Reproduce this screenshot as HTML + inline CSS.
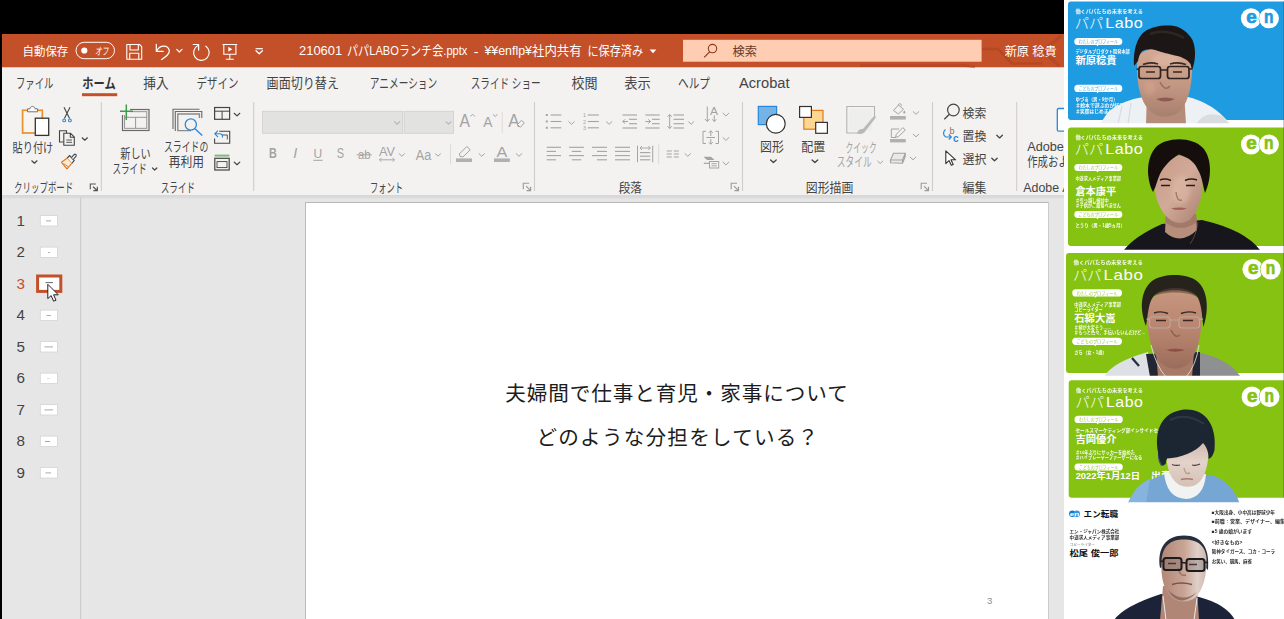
<!DOCTYPE html>
<html lang="ja">
<head>
<meta charset="utf-8">
<title>PowerPoint</title>
<style>
html,body{margin:0;padding:0;background:#000;}
body{width:1284px;height:619px;overflow:hidden;}
svg{display:block;}
text{font-family:"Liberation Sans","Noto Sans CJK JP",sans-serif;white-space:pre;}
</style>
</head>
<body>
<svg width="1284" height="619" viewBox="0 0 1284 619">
<rect x="0.0" y="0.0" width="1284.0" height="619.0" fill="#000"/>
<rect x="2.0" y="34.0" width="1062.0" height="585.0" fill="#e6e6e6"/>
<rect x="2.0" y="34.0" width="1062.0" height="33.5" fill="#c35028"/>
<rect x="2.0" y="67.5" width="1062.0" height="127.5" fill="#f3f2f1"/>
<linearGradient id="rs" x1="0" y1="0" x2="0" y2="1"><stop offset="0" stop-color="#d6d6d6"/><stop offset="0.7" stop-color="#dcdcdc"/><stop offset="1" stop-color="#e6e6e6"/></linearGradient>
<rect x="2.0" y="195.0" width="1062.0" height="4.0" fill="url(#rs)"/>
<path d="M860,65.5 H965 L975,67" fill="none" stroke="#a9411f" stroke-width="2.5" opacity="0.5"/>
<path d="M982,49 H998 L1012,63.5 H1042" fill="none" stroke="#a9411f" stroke-width="2.6" opacity="0.55"/>
<path d="M1061,36 L1043,50.5 L1059,66" fill="none" stroke="#a9411f" stroke-width="3.2" opacity="0.45"/>
<text x="22.5" y="55.6" font-size="12" fill="#fff" textLength="45.8" lengthAdjust="spacingAndGlyphs">自動保存</text>
<rect x="76.0" y="42.3" width="38.5" height="16.4" fill="none" stroke="#fff" stroke-width="1" rx="8.2"/>
<circle cx="84.3" cy="50.5" r="3.1" fill="#fff"/>
<text x="95.0" y="54.5" font-size="10.5" fill="#fff" textLength="13.3" lengthAdjust="spacingAndGlyphs" font-style="italic">オフ</text>
<path d="M126.8,44.5 H139.5 L141.7,46.7 V59.3 H126.8 Z M130,44.5 V50 H138.3 V44.5 M129.7,59.3 V53.3 H138.8 V59.3" fill="none" stroke="#fff" stroke-width="1.1" stroke-linejoin="round"/>
<path d="M156.3,44.3 V51.3 H163.3 M156.6,51 C160,44.5 168,44.8 169.3,50.5 C169.8,54.5 165.5,57 161.5,59.5" fill="none" stroke="#fff" stroke-width="1.2" stroke-linecap="round" stroke-linejoin="round"/>
<polyline points="176.7,49.4 179.3,52.0 182.0,49.4" fill="none" stroke="#fff" stroke-width="1.2" stroke-linecap="round" stroke-linejoin="round"/>
<path d="M193.2,44.5 H198.6 V50.1 M205.9,46.2 A7.8,7.8 0 1 1 198.1,45.5" fill="none" stroke="#fff" stroke-width="1.2" stroke-linecap="round" stroke-linejoin="round"/>
<path d="M222.5,44.5 H237.2 M223.8,44.5 V54.3 H235.9 V44.5 M229.8,54.3 V59.3 M225.8,59.3 H233.8" fill="none" stroke="#fff" stroke-width="1.1"/>
<path d="M228.3,46.8 L232.3,49.3 L228.3,51.8 Z" fill="#fff"/>
<line x1="255.6" y1="48.7" x2="262.8" y2="48.7" stroke="#fff" stroke-width="1.2"/>
<polyline points="256.0,50.8 259.2,53.8 262.4,50.8" fill="none" stroke="#fff" stroke-width="1.3" stroke-linecap="round" stroke-linejoin="round"/>
<text x="299.0" y="55.3" font-size="13" fill="#fff" textLength="43.2" lengthAdjust="spacingAndGlyphs">210601</text>
<text x="347.0" y="55.3" font-size="13" fill="#fff" textLength="120.4" lengthAdjust="spacingAndGlyphs">パパLABOランチ会.pptx</text>
<text x="473.7" y="55.8" font-size="13" fill="#fff" textLength="4.9" lengthAdjust="spacingAndGlyphs">-</text>
<text x="484.4" y="55.3" font-size="13" fill="#fff" textLength="97.2" lengthAdjust="spacingAndGlyphs">¥¥enflp¥社内共有</text>
<text x="587.5" y="55.3" font-size="13" fill="#fff" textLength="55.6" lengthAdjust="spacingAndGlyphs">に保存済み</text>
<path d="M649.6,49.6 H656.4 L653,53.3 Z" fill="#fff"/>
<rect x="683.0" y="39.8" width="298.6" height="21.9" fill="#fecdb2"/>
<circle cx="712.5" cy="48.6" r="4.2" fill="none" stroke="#8a3a1c" stroke-width="1.1"/>
<line x1="709.6" y1="51.8" x2="704.2" y2="57.3" stroke="#8a3a1c" stroke-width="1.2"/>
<text x="732.5" y="55.5" font-size="12.5" fill="#6b3a26" textLength="24.5" lengthAdjust="spacingAndGlyphs">検索</text>
<text x="1004.7" y="56.0" font-size="12.5" fill="#fff" textLength="52.0" lengthAdjust="spacingAndGlyphs">新原 稔貴</text>
<text x="16.0" y="88.3" font-size="13.5" fill="#444" textLength="37.4" lengthAdjust="spacingAndGlyphs">ファイル</text>
<text x="82.3" y="88.3" font-size="13.5" fill="#333" font-weight="bold" textLength="33.4" lengthAdjust="spacingAndGlyphs">ホーム</text>
<rect x="82.0" y="93.2" width="35.2" height="3.0" fill="#c35028"/>
<text x="143.3" y="88.3" font-size="13.5" fill="#444" textLength="25.3" lengthAdjust="spacingAndGlyphs">挿入</text>
<text x="196.4" y="88.3" font-size="13.5" fill="#444" textLength="42.0" lengthAdjust="spacingAndGlyphs">デザイン</text>
<text x="266.6" y="88.3" font-size="13.5" fill="#444" textLength="72.4" lengthAdjust="spacingAndGlyphs">画面切り替え</text>
<text x="369.8" y="88.3" font-size="13.5" fill="#444" textLength="67.4" lengthAdjust="spacingAndGlyphs">アニメーション</text>
<text x="470.7" y="88.3" font-size="13.5" fill="#444" textLength="70.0" lengthAdjust="spacingAndGlyphs">スライド ショー</text>
<text x="571.6" y="88.3" font-size="13.5" fill="#444" textLength="26.0" lengthAdjust="spacingAndGlyphs">校閲</text>
<text x="624.2" y="88.3" font-size="13.5" fill="#444" textLength="26.5" lengthAdjust="spacingAndGlyphs">表示</text>
<text x="678.0" y="88.3" font-size="13.5" fill="#444" textLength="32.0" lengthAdjust="spacingAndGlyphs">ヘルプ</text>
<text x="739.0" y="88.3" font-size="14" fill="#444" textLength="50.5" lengthAdjust="spacingAndGlyphs">Acrobat</text>
<line x1="101.3" y1="102.0" x2="101.3" y2="191.0" stroke="#cfcdcb" stroke-width="1.1"/>
<line x1="253.7" y1="102.0" x2="253.7" y2="191.0" stroke="#cfcdcb" stroke-width="1.1"/>
<line x1="534.5" y1="102.0" x2="534.5" y2="191.0" stroke="#cfcdcb" stroke-width="1.1"/>
<line x1="742.5" y1="102.0" x2="742.5" y2="191.0" stroke="#cfcdcb" stroke-width="1.1"/>
<line x1="932.5" y1="102.0" x2="932.5" y2="191.0" stroke="#cfcdcb" stroke-width="1.1"/>
<line x1="1016.7" y1="102.0" x2="1016.7" y2="191.0" stroke="#cfcdcb" stroke-width="1.1"/>
<rect x="22.6" y="110.3" width="19.7" height="22.7" fill="#f8f5f1" stroke="#e8912d" stroke-width="1.7"/>
<path d="M27.5,111.8 V108.8 H30 C30,105.6 35,105.6 35,108.8 H37.6 V111.8 Z" fill="#fafafa" stroke="#777" stroke-width="1"/>
<rect x="35.3" y="118.2" width="13.4" height="17.2" fill="#fff" stroke="#333" stroke-width="1.3"/>
<text x="12.5" y="151.7" font-size="13" fill="#444" textLength="40.8" lengthAdjust="spacingAndGlyphs">貼り付け</text>
<polyline points="31.8,160.8 34.4,163.2 37.0,160.8" fill="none" stroke="#444" stroke-width="1.2" stroke-linecap="round" stroke-linejoin="round"/>
<path d="M64,107.2 L69.6,118.6 M70,107.2 L64.4,118.6" fill="none" stroke="#444" stroke-width="1.1"/>
<circle cx="64.2" cy="120.4" r="1.4" fill="none" stroke="#2b88d8" stroke-width="1.1"/>
<circle cx="69.9" cy="120.4" r="1.4" fill="none" stroke="#2b88d8" stroke-width="1.1"/>
<path d="M63.5,142 H59.5 V130.8 H66.5 V133" fill="none" stroke="#444" stroke-width="1.1"/>
<path d="M63.8,133.2 H70.5 L74.3,137 V145.3 H63.8 Z M70.3,133.4 V137.2 H74.2" fill="#f3f2f1" stroke="#444" stroke-width="1.1"/>
<line x1="66.3" y1="140.0" x2="72.0" y2="140.0" stroke="#444" stroke-width="0.9"/>
<line x1="66.3" y1="142.3" x2="72.0" y2="142.3" stroke="#444" stroke-width="0.9"/>
<polyline points="82.2,137.8 84.8,140.2 87.4,137.8" fill="none" stroke="#444" stroke-width="1.2" stroke-linecap="round" stroke-linejoin="round"/>
<path d="M61.5,162.3 L67.3,158 L72,163.2 L67,168.8 Z" fill="#fbead6" stroke="#e0761a" stroke-width="1.1" stroke-linejoin="round"/>
<path d="M63.5,163.5 L68.5,166.8" fill="none" stroke="#e0761a" stroke-width="0.9"/>
<path d="M67.3,158 L69.6,155.6 L74.2,160.6 L72,163.2" fill="#f3f2f1" stroke="#444" stroke-width="1.1"/>
<path d="M71.6,157.4 L73.8,154.8 Q75.4,153.4 76.2,155.1 Q76.4,156.2 75.3,157.2 L73.2,159.5" fill="#f3f2f1" stroke="#444" stroke-width="1.1"/>
<text x="14.0" y="192.0" font-size="13" fill="#444" textLength="59.3" lengthAdjust="spacingAndGlyphs">クリップボード</text>
<path d="M90.3,189.2 V184.0 H95.8" fill="none" stroke="#555" stroke-width="1.1"/>
<path d="M93.1,186.8 L97.3,190.7 M97.3,186.7 V190.7 H93.3" fill="none" stroke="#555" stroke-width="1.2"/>
<rect x="122.5" y="109.5" width="26.5" height="21.0" fill="none" stroke="#6a6a6a" stroke-width="1.2"/>
<rect x="124.6" y="111.7" width="22.2" height="16.6" fill="none" stroke="#8a8a8a" stroke-width="0.9"/>
<line x1="124.6" y1="117.3" x2="146.8" y2="117.3" stroke="#8a8a8a" stroke-width="0.9"/>
<line x1="135.6" y1="117.3" x2="135.6" y2="128.3" stroke="#8a8a8a" stroke-width="0.9"/>
<rect x="119.5" y="104.0" width="10.5" height="11.0" fill="#f3f2f1"/>
<path d="M126.3,104.5 V120 M120,111.3 H133" fill="none" stroke="#3f9b4b" stroke-width="1.5"/>
<text x="120.3" y="157.9" font-size="13" fill="#444" textLength="30.5" lengthAdjust="spacingAndGlyphs">新しい</text>
<text x="112.5" y="173.0" font-size="13" fill="#444" textLength="34.2" lengthAdjust="spacingAndGlyphs">スライド</text>
<polyline points="152.5,168.0 154.7,170.0 156.9,168.0" fill="none" stroke="#444" stroke-width="1.2" stroke-linecap="round" stroke-linejoin="round"/>
<path d="M173,129 V109.3 H199.5" fill="none" stroke="#6a6a6a" stroke-width="1.1"/>
<path d="M175.3,131 V111.5 H201.8 V118" fill="none" stroke="#6a6a6a" stroke-width="1.1"/>
<path d="M191,130.6 H177.8 V114 H199.4 V118" fill="none" stroke="#8a8a8a" stroke-width="1.4"/>
<circle cx="190.8" cy="124.5" r="5.6" fill="#f3f2f1" stroke="#2b88d8" stroke-width="1.3"/>
<line x1="195.0" y1="128.8" x2="202.3" y2="135.6" stroke="#2b88d8" stroke-width="1.4"/>
<text x="164.0" y="151.2" font-size="13" fill="#444" textLength="44.3" lengthAdjust="spacingAndGlyphs">スライドの</text>
<text x="168.7" y="166.4" font-size="13" fill="#444" textLength="35.3" lengthAdjust="spacingAndGlyphs">再利用</text>
<rect x="214.6" y="107.5" width="15.0" height="11.8" fill="none" stroke="#444" stroke-width="1.2"/>
<line x1="214.6" y1="111.2" x2="229.6" y2="111.2" stroke="#444" stroke-width="1"/>
<line x1="222.1" y1="111.2" x2="222.1" y2="119.3" stroke="#444" stroke-width="1"/>
<polyline points="234.2,113.3 237.0,115.9 239.8,113.3" fill="none" stroke="#444" stroke-width="1.2" stroke-linecap="round" stroke-linejoin="round"/>
<path d="M219.3,131.3 H229.7 V143.3 H214.6 V138.5" fill="none" stroke="#444" stroke-width="1.1"/>
<path d="M222,135 H227.3 V139.5" fill="none" stroke="#444" stroke-width="0.9"/>
<path d="M218,130.6 L214.8,133.8 L218,137 M215,133.8 H219.5 C222,133.8 223,135.5 222.3,137.6" fill="none" stroke="#2b88d8" stroke-width="1.1"/>
<rect x="214.6" y="154.6" width="14.8" height="2.0" fill="#7fba7a"/>
<rect x="214.8" y="158.3" width="14.4" height="11.7" fill="none" stroke="#444" stroke-width="1.2"/>
<rect x="217.0" y="161.6" width="10.0" height="6.0" fill="none" stroke="#444" stroke-width="0.9"/>
<polyline points="234.2,162.1 237.0,164.7 239.8,162.1" fill="none" stroke="#444" stroke-width="1.2" stroke-linecap="round" stroke-linejoin="round"/>
<text x="160.8" y="192.0" font-size="13" fill="#444" textLength="34.2" lengthAdjust="spacingAndGlyphs">スライド</text>
<rect x="262.4" y="111.3" width="140.3" height="22.0" fill="#e2e2e1" stroke="#cfcfcf" stroke-width="0.8"/>
<polyline points="394.5,121.7 397.1,124.3 399.8,121.7" fill="none" stroke="#b5b5b5" stroke-width="1.1" stroke-linecap="round" stroke-linejoin="round"/>
<rect x="404.2" y="111.3" width="49.4" height="22.0" fill="#e2e2e1" stroke="#cfcfcf" stroke-width="0.8"/>
<polyline points="446.0,121.8 448.5,124.2 451.0,121.8" fill="none" stroke="#b5b5b5" stroke-width="1.1" stroke-linecap="round" stroke-linejoin="round"/>
<text x="459.5" y="126.9" font-size="18.5" fill="#a3a3a3" textLength="10.5" lengthAdjust="spacingAndGlyphs">A</text>
<g transform="rotate(180 472.6 115.2)">
<polyline points="470.6,114.2 472.6,116.2 474.6,114.2" fill="none" stroke="#a3a3a3" stroke-width="1" stroke-linecap="round" stroke-linejoin="round"/>
</g>
<text x="483.3" y="126.9" font-size="14.5" fill="#a3a3a3" textLength="9.2" lengthAdjust="spacingAndGlyphs">A</text>
<polyline points="493.2,114.6 495.2,116.5 497.2,114.6" fill="none" stroke="#a3a3a3" stroke-width="1" stroke-linecap="round" stroke-linejoin="round"/>
<line x1="502.2" y1="111.7" x2="502.2" y2="132.8" stroke="#dddbd9" stroke-width="1"/>
<text x="508.3" y="126.9" font-size="18.5" fill="#a3a3a3" textLength="11.2" lengthAdjust="spacingAndGlyphs">A</text>
<path d="M517.5,124.5 L521.5,120.3 L524.3,123 L520.3,127.3 Z" fill="#f3f2f1" stroke="#a3a3a3" stroke-width="1"/>
<text x="269.0" y="158.0" font-size="14" fill="#a3a3a3" font-weight="bold" textLength="7.8" lengthAdjust="spacingAndGlyphs">B</text>
<text x="293.3" y="158.2" font-size="14.5" fill="#a3a3a3" font-style="italic" font-family="Liberation Serif,serif">I</text>
<text x="313.6" y="157.5" font-size="13.5" fill="#a3a3a3" textLength="8.7" lengthAdjust="spacingAndGlyphs">U</text>
<line x1="313.3" y1="160.3" x2="322.6" y2="160.3" stroke="#a3a3a3" stroke-width="1"/>
<text x="336.7" y="158.2" font-size="14.5" fill="#a3a3a3" textLength="7.3" lengthAdjust="spacingAndGlyphs">S</text>
<text x="358.0" y="158.7" font-size="12.5" fill="#a3a3a3" textLength="12.5" lengthAdjust="spacingAndGlyphs">ab</text>
<line x1="356.7" y1="154.8" x2="371.7" y2="154.8" stroke="#a3a3a3" stroke-width="1"/>
<text x="379.0" y="156.0" font-size="13" fill="#a3a3a3" textLength="16.0" lengthAdjust="spacingAndGlyphs">AV</text>
<path d="M379.5,159.8 H394.5 M381.5,157.8 L379.5,159.8 L381.5,161.8 M392.5,157.8 L394.5,159.8 L392.5,161.8" fill="none" stroke="#a3a3a3" stroke-width="0.9"/>
<polyline points="399.2,153.7 401.9,156.3 404.5,153.7" fill="none" stroke="#a3a3a3" stroke-width="1" stroke-linecap="round" stroke-linejoin="round"/>
<text x="415.8" y="159.5" font-size="14" fill="#a3a3a3" textLength="15.5" lengthAdjust="spacingAndGlyphs">Aa</text>
<polyline points="435.5,153.8 438.0,156.2 440.5,153.8" fill="none" stroke="#a3a3a3" stroke-width="1" stroke-linecap="round" stroke-linejoin="round"/>
<line x1="450.5" y1="144.5" x2="450.5" y2="164.5" stroke="#dddbd9" stroke-width="1"/>
<rect x="456.0" y="158.4" width="16.0" height="3.6" fill="#b0b0b0"/>
<path d="M460,156.3 L459.3,154 L466.8,146.5 L470.3,149.8 L462.8,157 Z" fill="none" stroke="#a3a3a3" stroke-width="1"/>
<polyline points="479.0,153.7 481.7,156.3 484.4,153.7" fill="none" stroke="#a3a3a3" stroke-width="1" stroke-linecap="round" stroke-linejoin="round"/>
<rect x="494.0" y="158.4" width="15.8" height="3.6" fill="#b0b0b0"/>
<text x="496.5" y="157.0" font-size="14.5" fill="#a3a3a3" textLength="10.8" lengthAdjust="spacingAndGlyphs">A</text>
<polyline points="516.2,153.7 519.0,156.3 521.8,153.7" fill="none" stroke="#a3a3a3" stroke-width="1" stroke-linecap="round" stroke-linejoin="round"/>
<text x="370.0" y="192.0" font-size="13" fill="#444" textLength="33.0" lengthAdjust="spacingAndGlyphs">フォント</text>
<path d="M523.3,189.2 V183.3 H529.1" fill="none" stroke="#9a9a9a" stroke-width="1.1"/>
<path d="M526.1,186.1 L530.6,190.7 M530.6,186.7 V190.7 H526.6" fill="none" stroke="#9a9a9a" stroke-width="1.2"/>
<rect x="545.8" y="114.0" width="2.0" height="2.0" fill="#a3a3a3"/>
<line x1="550.5" y1="115.0" x2="561.3" y2="115.0" stroke="#a3a3a3" stroke-width="1.1"/>
<rect x="545.8" y="120.5" width="2.0" height="2.0" fill="#a3a3a3"/>
<line x1="550.5" y1="121.5" x2="561.3" y2="121.5" stroke="#a3a3a3" stroke-width="1.1"/>
<rect x="545.8" y="126.8" width="2.0" height="2.0" fill="#a3a3a3"/>
<line x1="550.5" y1="127.8" x2="561.3" y2="127.8" stroke="#a3a3a3" stroke-width="1.1"/>
<polyline points="568.8,121.7 571.5,124.3 574.2,121.7" fill="none" stroke="#a3a3a3" stroke-width="1" stroke-linecap="round" stroke-linejoin="round"/>
<text x="583.0" y="117.0" font-size="5.5" fill="#a3a3a3">1</text>
<line x1="587.8" y1="115.0" x2="598.8" y2="115.0" stroke="#a3a3a3" stroke-width="1.1"/>
<text x="583.0" y="123.5" font-size="5.5" fill="#a3a3a3">2</text>
<line x1="587.8" y1="121.5" x2="598.8" y2="121.5" stroke="#a3a3a3" stroke-width="1.1"/>
<text x="583.0" y="129.8" font-size="5.5" fill="#a3a3a3">3</text>
<line x1="587.8" y1="127.8" x2="598.8" y2="127.8" stroke="#a3a3a3" stroke-width="1.1"/>
<polyline points="606.3,121.7 609.1,124.3 611.9,121.7" fill="none" stroke="#a3a3a3" stroke-width="1" stroke-linecap="round" stroke-linejoin="round"/>
<line x1="622.5" y1="115.0" x2="637.0" y2="115.0" stroke="#a3a3a3" stroke-width="1.1"/>
<line x1="622.5" y1="128.0" x2="637.0" y2="128.0" stroke="#a3a3a3" stroke-width="1.1"/>
<line x1="629.0" y1="119.3" x2="637.0" y2="119.3" stroke="#a3a3a3" stroke-width="1.1"/>
<line x1="629.0" y1="123.7" x2="637.0" y2="123.7" stroke="#a3a3a3" stroke-width="1.1"/>
<path d="M628,121.5 H622.8 M625,119.3 L622.8,121.5 L625,123.7" fill="none" stroke="#a3a3a3" stroke-width="1"/>
<line x1="645.3" y1="115.0" x2="659.7" y2="115.0" stroke="#a3a3a3" stroke-width="1.1"/>
<line x1="645.3" y1="128.0" x2="659.7" y2="128.0" stroke="#a3a3a3" stroke-width="1.1"/>
<line x1="652.0" y1="119.3" x2="659.7" y2="119.3" stroke="#a3a3a3" stroke-width="1.1"/>
<line x1="652.0" y1="123.7" x2="659.7" y2="123.7" stroke="#a3a3a3" stroke-width="1.1"/>
<path d="M645.5,121.5 H650.5 M648.3,119.3 L650.5,121.5 L648.3,123.7" fill="none" stroke="#a3a3a3" stroke-width="1"/>
<line x1="673.5" y1="115.0" x2="684.0" y2="115.0" stroke="#a3a3a3" stroke-width="1.1"/>
<line x1="673.5" y1="119.3" x2="684.0" y2="119.3" stroke="#a3a3a3" stroke-width="1.1"/>
<line x1="673.5" y1="123.7" x2="684.0" y2="123.7" stroke="#a3a3a3" stroke-width="1.1"/>
<line x1="673.5" y1="128.0" x2="684.0" y2="128.0" stroke="#a3a3a3" stroke-width="1.1"/>
<path d="M669.7,114.5 V128.5 M667.6,116.8 L669.7,114.5 L671.8,116.8 M667.6,126.2 L669.7,128.5 L671.8,126.2" fill="none" stroke="#a3a3a3" stroke-width="1"/>
<polyline points="688.5,121.7 691.1,124.3 693.8,121.7" fill="none" stroke="#a3a3a3" stroke-width="1" stroke-linecap="round" stroke-linejoin="round"/>
<path d="M707.3,106.5 V121.5 M705,119 L707.3,121.5 L709.6,119" fill="none" stroke="#a3a3a3" stroke-width="1"/>
<text x="710.0" y="114.6" font-size="10.5" fill="#a3a3a3" textLength="8.0" lengthAdjust="spacingAndGlyphs">A</text>
<path d="M714.3,115.3 V121.5 M712.3,119.3 L714.3,121.5 L716.3,119.3" fill="none" stroke="#a3a3a3" stroke-width="1"/>
<polyline points="723.0,113.2 725.9,116.0 728.8,113.2" fill="none" stroke="#a3a3a3" stroke-width="1" stroke-linecap="round" stroke-linejoin="round"/>
<path d="M706,131.3 H703 V143.5 H706 M715.5,131.3 H718.5 V143.5 H715.5" fill="none" stroke="#a3a3a3" stroke-width="1"/>
<path d="M710.8,130.8 V136 M708.8,132.8 L710.8,130.8 L712.8,132.8 M706.5,137.5 H715 M710.8,139 V144.2 M708.8,142.2 L710.8,144.2 L712.8,142.2" fill="none" stroke="#a3a3a3" stroke-width="1"/>
<polyline points="723.0,137.6 725.9,140.4 728.8,137.6" fill="none" stroke="#a3a3a3" stroke-width="1" stroke-linecap="round" stroke-linejoin="round"/>
<path d="M703.5,156.8 H711 L714.5,160 H707 Z" fill="#a3a3a3"/>
<path d="M703.8,163.3 H709" fill="none" stroke="#a3a3a3" stroke-width="1.2"/>
<rect x="709.5" y="161.5" width="9.2" height="6.5" fill="#f3f2f1" stroke="#a3a3a3" stroke-width="1"/>
<line x1="711.5" y1="163.7" x2="716.8" y2="163.7" stroke="#a3a3a3" stroke-width="0.9"/>
<line x1="711.5" y1="165.8" x2="716.8" y2="165.8" stroke="#a3a3a3" stroke-width="0.9"/>
<polyline points="723.0,162.1 725.9,164.9 728.8,162.1" fill="none" stroke="#a3a3a3" stroke-width="1" stroke-linecap="round" stroke-linejoin="round"/>
<line x1="546.7" y1="147.3" x2="561.0" y2="147.3" stroke="#a3a3a3" stroke-width="1.1"/>
<line x1="546.7" y1="151.4" x2="556.0" y2="151.4" stroke="#a3a3a3" stroke-width="1.1"/>
<line x1="546.7" y1="155.6" x2="561.0" y2="155.6" stroke="#a3a3a3" stroke-width="1.1"/>
<line x1="546.7" y1="159.8" x2="556.0" y2="159.8" stroke="#a3a3a3" stroke-width="1.1"/>
<line x1="569.0" y1="147.3" x2="584.0" y2="147.3" stroke="#a3a3a3" stroke-width="1.1"/>
<line x1="571.8" y1="151.4" x2="581.2" y2="151.4" stroke="#a3a3a3" stroke-width="1.1"/>
<line x1="569.0" y1="155.6" x2="584.0" y2="155.6" stroke="#a3a3a3" stroke-width="1.1"/>
<line x1="571.8" y1="159.8" x2="581.2" y2="159.8" stroke="#a3a3a3" stroke-width="1.1"/>
<line x1="592.0" y1="147.3" x2="607.0" y2="147.3" stroke="#a3a3a3" stroke-width="1.1"/>
<line x1="597.0" y1="151.4" x2="607.0" y2="151.4" stroke="#a3a3a3" stroke-width="1.1"/>
<line x1="592.0" y1="155.6" x2="607.0" y2="155.6" stroke="#a3a3a3" stroke-width="1.1"/>
<line x1="597.0" y1="159.8" x2="607.0" y2="159.8" stroke="#a3a3a3" stroke-width="1.1"/>
<line x1="615.0" y1="147.3" x2="630.0" y2="147.3" stroke="#a3a3a3" stroke-width="1.1"/>
<line x1="615.0" y1="151.4" x2="630.0" y2="151.4" stroke="#a3a3a3" stroke-width="1.1"/>
<line x1="615.0" y1="155.6" x2="630.0" y2="155.6" stroke="#a3a3a3" stroke-width="1.1"/>
<line x1="615.0" y1="159.8" x2="630.0" y2="159.8" stroke="#a3a3a3" stroke-width="1.1"/>
<line x1="637.5" y1="145.7" x2="637.5" y2="162.3" stroke="#a3a3a3" stroke-width="1"/>
<line x1="652.7" y1="145.7" x2="652.7" y2="162.3" stroke="#a3a3a3" stroke-width="1"/>
<path d="M640,148 H650.3 M642,146 L640,148 L642,150 M648.3,146 L650.3,148 L648.3,150" fill="none" stroke="#a3a3a3" stroke-width="0.9"/>
<line x1="640.0" y1="152.6" x2="650.3" y2="152.6" stroke="#a3a3a3" stroke-width="1.1"/>
<line x1="640.0" y1="156.2" x2="650.3" y2="156.2" stroke="#a3a3a3" stroke-width="1.1"/>
<line x1="640.0" y1="159.8" x2="650.3" y2="159.8" stroke="#a3a3a3" stroke-width="1.1"/>
<line x1="658.7" y1="144.5" x2="658.7" y2="164.5" stroke="#dddbd9" stroke-width="1"/>
<line x1="666.7" y1="151.0" x2="671.8" y2="151.0" stroke="#a3a3a3" stroke-width="1"/>
<line x1="673.8" y1="151.0" x2="678.8" y2="151.0" stroke="#a3a3a3" stroke-width="1"/>
<line x1="666.7" y1="154.0" x2="671.8" y2="154.0" stroke="#a3a3a3" stroke-width="1"/>
<line x1="673.8" y1="154.0" x2="678.8" y2="154.0" stroke="#a3a3a3" stroke-width="1"/>
<line x1="666.7" y1="157.0" x2="671.8" y2="157.0" stroke="#a3a3a3" stroke-width="1"/>
<line x1="673.8" y1="157.0" x2="678.8" y2="157.0" stroke="#a3a3a3" stroke-width="1"/>
<polyline points="685.0,153.7 687.8,156.3 690.5,153.7" fill="none" stroke="#a3a3a3" stroke-width="1" stroke-linecap="round" stroke-linejoin="round"/>
<text x="618.7" y="192.0" font-size="13" fill="#444" textLength="23.3" lengthAdjust="spacingAndGlyphs">段落</text>
<path d="M731.2,189.2 V183.3 H737.0" fill="none" stroke="#9a9a9a" stroke-width="1.1"/>
<path d="M734.0,186.1 L738.5,190.7 M738.5,186.7 V190.7 H734.5" fill="none" stroke="#9a9a9a" stroke-width="1.2"/>
<rect x="758.3" y="106.4" width="18.3" height="18.2" fill="#73b3e7" stroke="#2b88d8" stroke-width="1.2"/>
<circle cx="775.8" cy="123.7" r="9.4" fill="#fff" stroke="#333" stroke-width="1.2"/>
<text x="760.0" y="151.2" font-size="13" fill="#444" textLength="23.8" lengthAdjust="spacingAndGlyphs">図形</text>
<polyline points="770.6,160.0 773.4,162.6 776.2,160.0" fill="none" stroke="#444" stroke-width="1.3" stroke-linecap="round" stroke-linejoin="round"/>
<rect x="803.8" y="110.4" width="19.2" height="18.8" fill="#fbd792" stroke="#e07a1a" stroke-width="1.2"/>
<rect x="799.6" y="106.5" width="11.8" height="10.9" fill="#fff" stroke="#333" stroke-width="1.2"/>
<rect x="815.7" y="122.4" width="11.7" height="10.9" fill="#fff" stroke="#333" stroke-width="1.2"/>
<text x="801.3" y="151.2" font-size="13" fill="#444" textLength="24.0" lengthAdjust="spacingAndGlyphs">配置</text>
<polyline points="812.1,160.0 814.9,162.6 817.7,160.0" fill="none" stroke="#444" stroke-width="1.3" stroke-linecap="round" stroke-linejoin="round"/>
<path d="M862,133 H846.8 V106.5 H874.5 V117" fill="none" stroke="#b4b4b4" stroke-width="1.1"/>
<rect x="849.0" y="108.8" width="23.3" height="22.0" fill="#eeeeed"/>
<path d="M857,133.5 C857.5,130.5 860,128.5 863,129 L873.5,116.5 C875,115 876.5,116.5 875.5,118 L865.5,131 C864.5,133.5 860,134.5 857,133.5 Z" fill="#b9b9b9"/>
<text x="845.5" y="151.7" font-size="13" fill="#a3a3a3" textLength="31.2" lengthAdjust="spacingAndGlyphs">クイック</text>
<text x="836.7" y="166.4" font-size="13" fill="#a3a3a3" textLength="35.0" lengthAdjust="spacingAndGlyphs">スタイル</text>
<polyline points="877.7,161.1 880.2,163.5 882.8,161.1" fill="none" stroke="#a3a3a3" stroke-width="1" stroke-linecap="round" stroke-linejoin="round"/>
<rect x="890.0" y="116.0" width="15.8" height="3.6" fill="#b0b0b0"/>
<path d="M893.5,110.5 L898.5,105 L903.5,109.3 L898.3,114 Z M898.3,105.3 C898.3,103 901.5,103 901.3,105.8" fill="none" stroke="#a3a3a3" stroke-width="1"/>
<path d="M904.3,110.5 C905.8,112 905.8,113.6 904.3,113.6 C902.8,113.6 903,112 904.3,110.5Z" fill="#a3a3a3"/>
<polyline points="913.2,111.7 916.0,114.3 918.8,111.7" fill="none" stroke="#a3a3a3" stroke-width="1" stroke-linecap="round" stroke-linejoin="round"/>
<rect x="890.0" y="139.0" width="15.8" height="3.4" fill="#b0b0b0"/>
<path d="M899,129 H891.3 V137.5 H896" fill="none" stroke="#a3a3a3" stroke-width="1"/>
<path d="M895.5,137.3 L896.3,134.3 L902.8,127.6 L905.3,130 L898.5,136.6 Z" fill="#f3f2f1" stroke="#a3a3a3" stroke-width="1"/>
<polyline points="913.2,134.2 916.0,136.8 918.8,134.2" fill="none" stroke="#a3a3a3" stroke-width="1" stroke-linecap="round" stroke-linejoin="round"/>
<path d="M890.5,160 L893.5,153.2 H905.3 L902.5,160 Z M890.5,160 V162.8 L902.5,163.3 V160 M902.5,163.3 L905.3,156.3 V153.2" fill="#e9e9e8" stroke="#a3a3a3" stroke-width="1.1"/>
<polyline points="910.2,157.2 913.0,159.8 915.8,157.2" fill="none" stroke="#a3a3a3" stroke-width="1" stroke-linecap="round" stroke-linejoin="round"/>
<text x="805.8" y="192.0" font-size="13" fill="#444" textLength="47.5" lengthAdjust="spacingAndGlyphs">図形描画</text>
<path d="M921.2,189.2 V183.3 H927.0" fill="none" stroke="#9a9a9a" stroke-width="1.1"/>
<path d="M924.0,186.1 L928.5,190.7 M928.5,186.7 V190.7 H924.5" fill="none" stroke="#9a9a9a" stroke-width="1.2"/>
<circle cx="953.4" cy="110.0" r="5.8" fill="none" stroke="#444" stroke-width="1.2"/>
<line x1="949.4" y1="114.3" x2="944.3" y2="119.3" stroke="#444" stroke-width="1.3"/>
<text x="962.5" y="117.5" font-size="12.5" fill="#444" textLength="23.8" lengthAdjust="spacingAndGlyphs">検索</text>
<text x="949.5" y="133.5" font-size="9" fill="#8a6d5a">b</text>
<text x="953.0" y="142.4" font-size="10" fill="#2b88d8" font-weight="bold">c</text>
<path d="M945.5,129.5 C942.8,131.5 942.8,135.5 946,137 H951 M948.8,134.5 L951.3,137 L948.8,139.5" fill="none" stroke="#2b88d8" stroke-width="1.2"/>
<text x="962.5" y="140.7" font-size="12.5" fill="#444" textLength="23.8" lengthAdjust="spacingAndGlyphs">置換</text>
<polyline points="996.8,135.3 999.6,137.9 1002.4,135.3" fill="none" stroke="#444" stroke-width="1.3" stroke-linecap="round" stroke-linejoin="round"/>
<path d="M945.8,150.8 V163.6 L949,160.6 L951.3,165.3 L953.2,164.4 L951,159.8 H955.6 Z" fill="#fff" stroke="#333" stroke-width="1.1" stroke-linejoin="round"/>
<text x="962.5" y="163.5" font-size="12.5" fill="#444" textLength="23.8" lengthAdjust="spacingAndGlyphs">選択</text>
<polyline points="991.8,158.2 994.5,160.8 997.2,158.2" fill="none" stroke="#444" stroke-width="1.3" stroke-linecap="round" stroke-linejoin="round"/>
<text x="962.5" y="192.0" font-size="13" fill="#444" textLength="23.8" lengthAdjust="spacingAndGlyphs">編集</text>
<rect x="1057.3" y="108.5" width="12.7" height="22.7" fill="#fff" stroke="#2b88d8" stroke-width="1.3" rx="1.5"/>
<text x="1027.2" y="151.2" font-size="13.5" fill="#444" textLength="36.7" lengthAdjust="spacingAndGlyphs">Adobe</text>
<text x="1027.2" y="166.2" font-size="13" fill="#444" textLength="41.5" lengthAdjust="spacingAndGlyphs">作成およ</text>
<text x="1023.3" y="192.0" font-size="13" fill="#444" textLength="35.7" lengthAdjust="spacingAndGlyphs">Adobe</text>
<text x="1062.3" y="192.0" font-size="13" fill="#444">A</text>
<line x1="80.7" y1="197.5" x2="80.7" y2="619.0" stroke="#cbcbcb" stroke-width="1.2"/>
<rect x="81.5" y="199.0" width="6.5" height="420.0" fill="#eaeaea" opacity="0.3"/>
<text x="16.4" y="225.7" font-size="15.2" fill="#444">1</text>
<rect x="40.3" y="215.6" width="17.1" height="10.4" fill="#fff" stroke="#d4d4d4" stroke-width="0.8"/>
<line x1="46.0" y1="220.9" x2="51.0" y2="220.9" stroke="#777" stroke-width="0.8" opacity="0.8"/>
<text x="16.4" y="257.2" font-size="15.2" fill="#444">2</text>
<rect x="40.3" y="247.1" width="17.1" height="10.4" fill="#fff" stroke="#d4d4d4" stroke-width="0.8"/>
<line x1="48.0" y1="252.4" x2="50.0" y2="252.4" stroke="#777" stroke-width="0.8" opacity="0.8"/>
<text x="16.6" y="288.7" font-size="15.2" fill="#c35028">3</text>
<rect x="37.6" y="276.0" width="23.2" height="15.4" fill="#fff" stroke="#c35028" stroke-width="3"/>
<line x1="45.5" y1="282.6" x2="53.0" y2="282.6" stroke="#555" stroke-width="0.9"/>
<text x="16.4" y="320.2" font-size="15.2" fill="#444">4</text>
<rect x="40.3" y="310.1" width="17.1" height="10.4" fill="#fff" stroke="#d4d4d4" stroke-width="0.8"/>
<line x1="46.5" y1="315.4" x2="51.0" y2="315.4" stroke="#777" stroke-width="0.8" opacity="0.8"/>
<text x="16.4" y="351.7" font-size="15.2" fill="#444">5</text>
<rect x="40.3" y="341.6" width="17.1" height="10.4" fill="#fff" stroke="#d4d4d4" stroke-width="0.8"/>
<line x1="44.5" y1="346.9" x2="53.0" y2="346.9" stroke="#777" stroke-width="0.8" opacity="0.8"/>
<text x="16.4" y="383.2" font-size="15.2" fill="#444">6</text>
<rect x="40.3" y="373.1" width="17.1" height="10.4" fill="#fff" stroke="#d4d4d4" stroke-width="0.8"/>
<line x1="47.0" y1="378.4" x2="50.0" y2="378.4" stroke="#777" stroke-width="0.8" opacity="0.3"/>
<text x="16.4" y="414.7" font-size="15.2" fill="#444">7</text>
<rect x="40.3" y="404.6" width="17.1" height="10.4" fill="#fff" stroke="#d4d4d4" stroke-width="0.8"/>
<line x1="44.5" y1="409.9" x2="53.0" y2="409.9" stroke="#777" stroke-width="0.8" opacity="0.8"/>
<text x="16.4" y="446.2" font-size="15.2" fill="#444">8</text>
<rect x="40.3" y="436.1" width="17.1" height="10.4" fill="#fff" stroke="#d4d4d4" stroke-width="0.8"/>
<line x1="45.0" y1="441.4" x2="50.0" y2="441.4" stroke="#777" stroke-width="0.8" opacity="0.9"/>
<text x="16.4" y="477.7" font-size="15.2" fill="#444">9</text>
<rect x="40.3" y="467.6" width="17.1" height="10.4" fill="#fff" stroke="#d4d4d4" stroke-width="0.8"/>
<line x1="45.5" y1="472.9" x2="51.0" y2="472.9" stroke="#777" stroke-width="0.8" opacity="0.8"/>
<path d="M47.8,284.3 V298.6 L51.2,295.6 L53.6,301.2 L56,300.2 L53.6,294.8 H58.3 Z" fill="#fff" stroke="#222" stroke-width="1" stroke-linejoin="round"/>
<rect x="305.0" y="202.0" width="743.6" height="418.0" fill="#b9b9b9"/>
<rect x="306.0" y="203.0" width="742.0" height="417.0" fill="#fff"/>
<text x="505.2" y="401.2" font-size="20.6" fill="#1c1c1c" textLength="342.6" lengthAdjust="spacing">夫婦間で仕事と育児・家事について</text>
<text x="536.5" y="445.3" font-size="20.6" fill="#1c1c1c" textLength="281.7" lengthAdjust="spacing">どのような分担をしている？</text>
<text x="986.9" y="603.9" font-size="9.5" fill="#8c8c8c">3</text>
<rect x="1064.0" y="0.0" width="220.0" height="619.0" fill="#fff"/>
<defs><filter id="bl" x="-5%" y="-5%" width="110%" height="110%"><feGaussianBlur stdDeviation="0.7"/></filter><filter id="bl2" x="-20%" y="-20%" width="140%" height="140%"><feGaussianBlur stdDeviation="2.2"/></filter><filter id="bt" x="-5%" y="-20%" width="110%" height="140%"><feGaussianBlur stdDeviation="0.25"/></filter></defs>
<path d="M1071,1.5 H1284 V120 H1071 Q1068,120 1068,117 V4.5 Q1068,1.5 1071,1.5 Z" fill="#1f9ce1"/>
<text x="1075.4" y="13.3" font-size="4.8" fill="#fff" font-weight="bold" textLength="67.5" lengthAdjust="spacingAndGlyphs" opacity="0.92">働くパパたちの未来を考える</text>
<text x="1074.8" y="27.9" font-size="14" fill="#fff" font-weight="300" textLength="28.5" lengthAdjust="spacingAndGlyphs">パパ</text>
<text x="1105.3" y="27.9" font-size="14.8" fill="#fff" textLength="38.1" lengthAdjust="spacingAndGlyphs" letter-spacing="0.5">Labo</text>
<circle cx="1251.0" cy="18.4" r="10.1" fill="#fff"/>
<circle cx="1269.0" cy="18.4" r="10.4" fill="#1f9ce1"/>
<circle cx="1269.0" cy="18.4" r="9.9" fill="#fff"/>
<text x="1246.2" y="23.3" font-size="18.5" fill="#1f9ce1" font-weight="bold" textLength="10.5" lengthAdjust="spacingAndGlyphs" stroke="#1f9ce1" stroke-width="0.7">e</text>
<text x="1264.1" y="23.3" font-size="18.5" fill="#1f9ce1" font-weight="bold" textLength="9.5" lengthAdjust="spacingAndGlyphs" stroke="#1f9ce1" stroke-width="0.7">n</text>
<rect x="1074.3" y="38.0" width="48.0" height="7.0" fill="#fff" rx="3.5"/>
<path d="M1096.3,44.7 l1.2,1.6 l1.2,-1.6 Z" fill="#fff"/>
<text x="1078.8" y="43.2" font-size="4.6" fill="#1f9ce1" textLength="39.0" lengthAdjust="spacingAndGlyphs" opacity="0.85">わたしのプロフィール</text>
<text x="1075.4" y="53.3" font-size="4.4" fill="#fff" font-weight="bold" textLength="54.4" lengthAdjust="spacingAndGlyphs" opacity="0.95">デジタルプロダクト開発本部</text>
<text x="1075.4" y="64.2" font-size="10" fill="#fff" font-weight="bold" textLength="41.3" lengthAdjust="spacingAndGlyphs">新原稔貴</text>
<rect x="1074.3" y="84.8" width="48.0" height="7.2" fill="#fff" rx="3.6000000000000014"/>
<path d="M1096.3,91.7 l1.2,1.6 l1.2,-1.6 Z" fill="#fff"/>
<text x="1078.8" y="90.1" font-size="4.6" fill="#1f9ce1" textLength="39.0" lengthAdjust="spacingAndGlyphs" opacity="0.85">こどものプロフィール</text>
<text x="1075.4" y="100.5" font-size="4.8" fill="#fff" font-weight="bold" textLength="42.2" lengthAdjust="spacingAndGlyphs" opacity="0.95">ゆづる（男・9か月）</text>
<text x="1075.4" y="106.7" font-size="4.6" fill="#fff" font-weight="bold" textLength="48.6" lengthAdjust="spacingAndGlyphs" opacity="0.95">＃絵本で遊ぶのが好き</text>
<text x="1075.4" y="112.7" font-size="4.6" fill="#fff" font-weight="bold" textLength="42.6" lengthAdjust="spacingAndGlyphs" opacity="0.95">＃笑顔はじめました</text>
<path d="M1071,127.5 H1284 V246 H1071 Q1068,246 1068,243 V130.5 Q1068,127.5 1071,127.5 Z" fill="#86c211"/>
<text x="1075.4" y="139.3" font-size="4.8" fill="#fff" font-weight="bold" textLength="67.5" lengthAdjust="spacingAndGlyphs" opacity="0.92">働くパパたちの未来を考える</text>
<text x="1074.8" y="154.0" font-size="14" fill="#fff" font-weight="300" textLength="28.5" lengthAdjust="spacingAndGlyphs">パパ</text>
<text x="1105.3" y="154.0" font-size="14.8" fill="#fff" textLength="38.1" lengthAdjust="spacingAndGlyphs" letter-spacing="0.5">Labo</text>
<circle cx="1251.0" cy="144.5" r="10.1" fill="#fff"/>
<circle cx="1269.0" cy="144.5" r="10.4" fill="#86c211"/>
<circle cx="1269.0" cy="144.5" r="9.9" fill="#fff"/>
<text x="1246.2" y="149.4" font-size="18.5" fill="#86c211" font-weight="bold" textLength="10.5" lengthAdjust="spacingAndGlyphs" stroke="#86c211" stroke-width="0.7">e</text>
<text x="1264.1" y="149.4" font-size="18.5" fill="#86c211" font-weight="bold" textLength="9.5" lengthAdjust="spacingAndGlyphs" stroke="#86c211" stroke-width="0.7">n</text>
<rect x="1074.3" y="164.0" width="48.0" height="7.1" fill="#fff" rx="3.549999999999997"/>
<path d="M1096.3,170.79999999999998 l1.2,1.6 l1.2,-1.6 Z" fill="#fff"/>
<text x="1078.8" y="169.2" font-size="4.6" fill="#86c211" textLength="39.0" lengthAdjust="spacingAndGlyphs" opacity="0.85">わたしのプロフィール</text>
<text x="1075.4" y="179.6" font-size="4.4" fill="#fff" font-weight="bold" textLength="45.6" lengthAdjust="spacingAndGlyphs" opacity="0.95">中途求人メディア事業部</text>
<text x="1075.4" y="195.1" font-size="10" fill="#fff" font-weight="bold" textLength="40.8" lengthAdjust="spacingAndGlyphs">倉本康平</text>
<text x="1075.4" y="202.2" font-size="4.4" fill="#fff" font-weight="bold" textLength="33.4" lengthAdjust="spacingAndGlyphs" opacity="0.95">＃引っ越し検討中</text>
<text x="1075.4" y="207.4" font-size="4.4" fill="#fff" font-weight="bold" textLength="45.6" lengthAdjust="spacingAndGlyphs" opacity="0.95">＃子供がご飯食べません</text>
<rect x="1074.3" y="211.1" width="48.0" height="6.9" fill="#fff" rx="3.4499999999999886"/>
<path d="M1096.3,217.7 l1.2,1.6 l1.2,-1.6 Z" fill="#fff"/>
<text x="1078.8" y="216.2" font-size="4.6" fill="#86c211" textLength="39.0" lengthAdjust="spacingAndGlyphs" opacity="0.85">こどものプロフィール</text>
<text x="1075.4" y="227.3" font-size="4.8" fill="#fff" font-weight="bold" textLength="49.6" lengthAdjust="spacingAndGlyphs" opacity="0.95">とうり（男・1歳5ヵ月）</text>
<path d="M1069,253 H1284 V373 H1069 Q1066,373 1066,370 V256 Q1066,253 1069,253 Z" fill="#86c211"/>
<text x="1073.6" y="264.3" font-size="4.8" fill="#fff" font-weight="bold" textLength="69.3" lengthAdjust="spacingAndGlyphs" opacity="0.92">働くパパたちの未来を考える</text>
<text x="1073.0" y="279.5" font-size="14" fill="#fff" font-weight="300" textLength="28.5" lengthAdjust="spacingAndGlyphs">パパ</text>
<text x="1103.5" y="279.5" font-size="14.8" fill="#fff" textLength="39.9" lengthAdjust="spacingAndGlyphs" letter-spacing="0.5">Labo</text>
<circle cx="1252.8" cy="269.3" r="10.4" fill="#fff"/>
<circle cx="1270.6" cy="269.3" r="10.7" fill="#86c211"/>
<circle cx="1270.6" cy="269.3" r="10.2" fill="#fff"/>
<text x="1248.0" y="274.2" font-size="18.5" fill="#86c211" font-weight="bold" textLength="10.5" lengthAdjust="spacingAndGlyphs" stroke="#86c211" stroke-width="0.7">e</text>
<text x="1265.7" y="274.2" font-size="18.5" fill="#86c211" font-weight="bold" textLength="9.5" lengthAdjust="spacingAndGlyphs" stroke="#86c211" stroke-width="0.7">n</text>
<rect x="1072.2" y="289.3" width="49.8" height="7.2" fill="#fff" rx="3.5999999999999943"/>
<path d="M1094.2,296.2 l1.2,1.6 l1.2,-1.6 Z" fill="#fff"/>
<text x="1076.7" y="294.6" font-size="4.6" fill="#86c211" textLength="40.8" lengthAdjust="spacingAndGlyphs" opacity="0.85">わたしのプロフィール</text>
<text x="1074.3" y="305.6" font-size="4.4" fill="#fff" font-weight="bold" textLength="46.7" lengthAdjust="spacingAndGlyphs" opacity="0.95">中途求人メディア事業部</text>
<text x="1074.3" y="310.6" font-size="4.4" fill="#fff" font-weight="bold" textLength="28.4" lengthAdjust="spacingAndGlyphs" opacity="0.95">コピーライター</text>
<text x="1074.3" y="321.5" font-size="10" fill="#fff" font-weight="bold" textLength="41.2" lengthAdjust="spacingAndGlyphs">石綿大嵩</text>
<text x="1074.3" y="328.9" font-size="4.4" fill="#fff" font-weight="bold" textLength="37.2" lengthAdjust="spacingAndGlyphs" opacity="0.95">＃嫁が大変そう……</text>
<text x="1074.3" y="333.6" font-size="4.4" fill="#fff" font-weight="bold" textLength="71.2" lengthAdjust="spacingAndGlyphs" opacity="0.95">＃もっと色々、手伝いたいんだけど…</text>
<rect x="1072.2" y="337.7" width="49.8" height="7.3" fill="#fff" rx="3.6500000000000057"/>
<path d="M1094.2,344.7 l1.2,1.6 l1.2,-1.6 Z" fill="#fff"/>
<text x="1076.7" y="343.0" font-size="4.6" fill="#86c211" textLength="40.8" lengthAdjust="spacingAndGlyphs" opacity="0.85">こどものプロフィール</text>
<text x="1074.3" y="354.3" font-size="4.8" fill="#fff" font-weight="bold" textLength="32.5" lengthAdjust="spacingAndGlyphs" opacity="0.95">さち（女・1歳）</text>
<path d="M1071.7,380.2 H1284 V497.7 H1071.7 Q1068.7,497.7 1068.7,494.7 V383.2 Q1068.7,380.2 1071.7,380.2 Z" fill="#86c211"/>
<text x="1076.0" y="391.7" font-size="4.8" fill="#fff" font-weight="bold" textLength="66.9" lengthAdjust="spacingAndGlyphs" opacity="0.92">働くパパたちの未来を考える</text>
<text x="1075.4" y="406.6" font-size="14" fill="#fff" font-weight="300" textLength="28.5" lengthAdjust="spacingAndGlyphs">パパ</text>
<text x="1105.9" y="406.6" font-size="14.8" fill="#fff" textLength="37.5" lengthAdjust="spacingAndGlyphs" letter-spacing="0.5">Labo</text>
<circle cx="1251.9" cy="396.8" r="10.3" fill="#fff"/>
<circle cx="1269.4" cy="396.8" r="10.6" fill="#86c211"/>
<circle cx="1269.4" cy="396.8" r="10.1" fill="#fff"/>
<text x="1247.1" y="401.7" font-size="18.5" fill="#86c211" font-weight="bold" textLength="10.5" lengthAdjust="spacingAndGlyphs" stroke="#86c211" stroke-width="0.7">e</text>
<text x="1264.5" y="401.7" font-size="18.5" fill="#86c211" font-weight="bold" textLength="9.5" lengthAdjust="spacingAndGlyphs" stroke="#86c211" stroke-width="0.7">n</text>
<rect x="1074.5" y="415.8" width="48.3" height="7.3" fill="#fff" rx="3.6500000000000057"/>
<path d="M1096.5,422.8 l1.2,1.6 l1.2,-1.6 Z" fill="#fff"/>
<text x="1079.0" y="421.1" font-size="4.6" fill="#86c211" textLength="39.3" lengthAdjust="spacingAndGlyphs" opacity="0.85">わたしのプロフィール</text>
<text x="1075.4" y="432.1" font-size="4.4" fill="#fff" font-weight="bold" textLength="96.6" lengthAdjust="spacingAndGlyphs" opacity="0.95">セールスマーケティング部インサイドセールス</text>
<text x="1075.4" y="443.0" font-size="10" fill="#fff" font-weight="bold" textLength="41.3" lengthAdjust="spacingAndGlyphs">吉岡優介</text>
<text x="1075.4" y="454.2" font-size="4.4" fill="#fff" font-weight="bold" textLength="59.6" lengthAdjust="spacingAndGlyphs" opacity="0.95">＃10年ぶりにサッカーを始めた</text>
<text x="1075.4" y="459.4" font-size="4.4" fill="#fff" font-weight="bold" textLength="66.9" lengthAdjust="spacingAndGlyphs" opacity="0.95">＃ハイプレーヤーファーザーになる</text>
<rect x="1074.5" y="463.4" width="48.3" height="7.2" fill="#fff" rx="3.5999999999999943"/>
<path d="M1096.5,470.3 l1.2,1.6 l1.2,-1.6 Z" fill="#fff"/>
<text x="1079.0" y="468.7" font-size="4.6" fill="#86c211" textLength="39.3" lengthAdjust="spacingAndGlyphs" opacity="0.85">こどものプロフィール</text>
<text x="1075.7" y="479.3" font-size="9.3" fill="#fff" font-weight="bold" textLength="64.3" lengthAdjust="spacingAndGlyphs">2022年1月12日</text>
<text x="1151.0" y="479.3" font-size="9.3" fill="#fff" font-weight="bold" textLength="20.0" lengthAdjust="spacingAndGlyphs">出産</text>
<circle cx="1072.3" cy="513.8" r="3.2" fill="#1878c8"/>
<circle cx="1076.8" cy="513.8" r="3.2" fill="#2b9be6"/>
<text x="1069.8" y="515.6" font-size="4.5" fill="#fff" font-weight="bold" textLength="9.5" lengthAdjust="spacingAndGlyphs">en</text>
<text x="1083.6" y="516.8" font-size="8.3" fill="#111" font-weight="bold" textLength="34.4" lengthAdjust="spacingAndGlyphs">エン転職</text>
<text x="1069.6" y="532.7" font-size="4.6" fill="#222" font-weight="bold" textLength="49.7" lengthAdjust="spacingAndGlyphs" opacity="0.95">エン・ジャパン株式会社</text>
<text x="1069.6" y="538.9" font-size="4.6" fill="#222" font-weight="bold" textLength="49.7" lengthAdjust="spacingAndGlyphs" opacity="0.95">中途求人メディア事業部</text>
<text x="1069.6" y="545.9" font-size="3.8" fill="#666" font-weight="normal" textLength="25.4" lengthAdjust="spacingAndGlyphs" opacity="0.95">コピーライター</text>
<text x="1069.6" y="555.5" font-size="7.6" fill="#111" font-weight="bold" textLength="48.8" lengthAdjust="spacingAndGlyphs">松尾 俊一郎</text>
<text x="1211.8" y="513.7" font-size="4.6" fill="#222" font-weight="bold" textLength="63.2" lengthAdjust="spacingAndGlyphs" opacity="0.95">■大阪出身、小中高は野球少年</text>
<text x="1211.8" y="523.2" font-size="4.6" fill="#222" font-weight="bold" textLength="78.2" lengthAdjust="spacingAndGlyphs" opacity="0.95">■前職：営業、デザイナー、編集者</text>
<text x="1211.8" y="532.7" font-size="4.6" fill="#222" font-weight="bold" textLength="40.2" lengthAdjust="spacingAndGlyphs" opacity="0.95">■5 歳の娘がいます</text>
<text x="1211.8" y="543.7" font-size="4.6" fill="#222" font-weight="bold" textLength="30.5" lengthAdjust="spacingAndGlyphs" opacity="0.95">&lt;好きなもの&gt;</text>
<text x="1211.8" y="553.3" font-size="4.6" fill="#222" font-weight="bold" textLength="63.2" lengthAdjust="spacingAndGlyphs" opacity="0.95">阪神タイガース、コカ・コーラ</text>
<text x="1211.8" y="562.9" font-size="4.6" fill="#222" font-weight="bold" textLength="40.2" lengthAdjust="spacingAndGlyphs" opacity="0.95">お笑い、競馬、麻雀</text>
<defs><clipPath id="c1"><rect x="1064" y="0" width="220" height="123.2"/></clipPath><clipPath id="c2"><rect x="1064" y="126" width="220" height="123.8"/></clipPath><clipPath id="c3"><rect x="1064" y="252" width="220" height="123.8"/></clipPath><clipPath id="c4"><rect x="1064" y="379" width="220" height="123.2"/></clipPath><clipPath id="c5"><rect x="1064" y="503" width="220" height="116"/></clipPath><linearGradient id="sk1" x1="0" y1="0" x2="0" y2="1"><stop offset="0" stop-color="#d3a994"/><stop offset="0.55" stop-color="#c39782"/><stop offset="1" stop-color="#a87f6e"/></linearGradient><linearGradient id="sk2" x1="0" y1="0" x2="1" y2="1"><stop offset="0" stop-color="#c79c88"/><stop offset="0.5" stop-color="#d2aa98"/><stop offset="1" stop-color="#a98070"/></linearGradient><linearGradient id="sk3" x1="0" y1="0" x2="0" y2="1"><stop offset="0" stop-color="#c8977e"/><stop offset="0.6" stop-color="#b4816c"/><stop offset="1" stop-color="#9a6c5a"/></linearGradient><linearGradient id="sk4" x1="0" y1="0" x2="0" y2="1"><stop offset="0" stop-color="#cdb3a6"/><stop offset="0.5" stop-color="#e3d3ca"/><stop offset="1" stop-color="#d5c0b5"/></linearGradient><linearGradient id="sk5" x1="0" y1="0" x2="1" y2="0"><stop offset="0" stop-color="#b28777"/><stop offset="0.5" stop-color="#c8a494"/><stop offset="0.8" stop-color="#e0d0c8"/><stop offset="1" stop-color="#cdb8ae"/></linearGradient></defs>
<g clip-path="url(#c1)">
<g filter="url(#bl)">
<path d="M1100,124 L1108,112 Q1122,100 1146,96.5 L1186,96.5 Q1214,103 1230,124 Z" fill="#edf1f3"/>
<path d="M1118,124 L1122,106 M1128,124 L1131,103" fill="none" stroke="#d4dde3" stroke-width="1.2"/>
<path d="M1196,124 Q1205,110 1222,116 L1230,124 Z" fill="#d9dde0"/>
<path d="M1147,92 L1146,124 L1186,124 L1184,92 Z" fill="#b58b79"/>
<path d="M1146,100 Q1165,118 1186,100 L1186,96 L1146,96 Z" fill="#9d7463" opacity="0.6"/>
<path d="M1137.5,58 C1136,80 1139,100 1150,111 C1158,118.5 1172,118.5 1180,111 C1190,100 1193,80 1192,58 C1188,44 1142,44 1137.5,58 Z" fill="url(#sk1)"/>
<ellipse cx="1166.0" cy="60.0" rx="14.0" ry="7.0" fill="#e2bba6" opacity="0.6" filter="url(#bl2)"/>
<ellipse cx="1150.0" cy="88.0" rx="6.0" ry="7.0" fill="#d9a693" opacity="0.5" filter="url(#bl2)"/>
<path d="M1134,66 C1133,50 1137,38 1144,32 C1152,26 1162,25 1171,25.5 C1180,26 1188,32 1192.5,40 C1196,48 1196,60 1192,70 L1190.5,64 C1187,58.5 1180,56.5 1176,55.7 C1168,54 1160,51.5 1158,51 C1153,48.5 1146,48.5 1142,51.2 C1139.5,54 1138.5,58 1138,61 Z" fill="#1d1816"/>
<path d="M1150,34 Q1166,28 1184,38" fill="none" stroke="#3a302c" stroke-width="2.5" opacity="0.6"/>
<path d="M1143,64.5 Q1150,61.5 1158,64 M1170,64 Q1178,61.5 1186,64.5" fill="none" stroke="#3a2a25" stroke-width="1.6"/>
<path d="M1146,72 H1155 M1173,72 H1182" fill="none" stroke="#3a2925" stroke-width="1.6"/>
<path d="M1160,82 Q1165,92 1170,86" fill="none" stroke="#9a6f5e" stroke-width="1.6"/>
<path d="M1156,99 Q1165,96 1175,99 Q1165,104 1156,99 Z" fill="#8f5a52"/>
</g>
<g filter="url(#bt)">
<rect x="1139.0" y="66.5" width="21.5" height="12.0" fill="none" stroke="#2e2220" stroke-width="1.7" rx="2.5"/>
<rect x="1167.5" y="66.5" width="21.5" height="12.0" fill="none" stroke="#2e2220" stroke-width="1.7" rx="2.5"/>
<line x1="1160.5" y1="70.0" x2="1167.5" y2="70.0" stroke="#2e2220" stroke-width="1.5"/>
<line x1="1136.5" y1="69.0" x2="1139.0" y2="69.5" stroke="#2e2220" stroke-width="1.4"/>
<line x1="1189.0" y1="69.5" x2="1192.5" y2="68.5" stroke="#2e2220" stroke-width="1.4"/>
</g></g>
<g clip-path="url(#c2)">
<g filter="url(#bl)">
<path d="M1124,250 Q1135,236 1162,224 L1202,220 Q1245,230 1260,250 Z" fill="#17151a"/>
<path d="M1166,212 L1165,232 Q1180,246 1197,230 L1196,210 Z" fill="#b78e7c"/>
<path d="M1165,222 Q1180,234 1197,222 L1196,214 L1166,214 Z" fill="#9a7262" opacity="0.7"/>
<path d="M1155,178 C1153,196 1160,212 1170,219.5 C1176,224 1184,224 1190,219.5 C1198,211 1204,196 1202.5,176 C1200,150 1160,148 1155,178 Z" fill="url(#sk2)"/>
<ellipse cx="1181.0" cy="190.0" rx="9.0" ry="14.0" fill="#e0bba9" opacity="0.55" filter="url(#bl2)"/>
<path d="M1153,192 C1146,178 1146,158 1156,147 C1166,137 1192,136 1203,148 C1212,158 1212,178 1205,193 C1203,186 1202,176 1198,170 C1195,163 1190,158 1179,154.5 C1172,158 1164,166 1160,174 C1157,180 1156,187 1153,192 Z" fill="#15110f"/>
<path d="M1160,180 Q1165,178 1171,180.5 M1185,180.5 Q1191,178 1197,180" fill="none" stroke="#2c1f1b" stroke-width="1.5"/>
<path d="M1161,185.5 H1170 M1186,185.5 H1195" fill="none" stroke="#2a1c19" stroke-width="1.7"/>
<path d="M1176,192 Q1177,202 1182,200" fill="none" stroke="#a37a69" stroke-width="1.5"/>
<path d="M1171,208.5 Q1179,206.5 1187,208.5 Q1179,211.5 1171,208.5 Z" fill="#a0605a"/>
<path d="M1198,222 Q1196,236 1190,244" fill="none" stroke="#7a5a50" stroke-width="0.7"/>
</g>
</g>
<g clip-path="url(#c3)">
<g filter="url(#bl)">
<path d="M1104,377 Q1112,362 1148,352 L1152,377 Z" fill="#dde1e5"/>
<path d="M1196,352 Q1228,358 1241,377 L1194,377 Z" fill="#8e9092"/>
<path d="M1146,354 L1150,377 L1200,377 L1200,352 Z" fill="#232731"/>
<path d="M1132,358 L1139,366" fill="none" stroke="#2a2e3a" stroke-width="2.2"/>
<path d="M1156,352 L1158,377 L1192,377 L1194,352 Z" fill="#a87966"/>
<path d="M1147.5,308 C1146,332 1151,352 1161,363 C1168,370.5 1182,370.5 1189,363 C1198,352 1203,332 1201.5,306 C1198,284 1152,284 1147.5,308 Z" fill="url(#sk3)"/>
<path d="M1146,326 C1139,308 1141,290 1152,281 C1164,273 1188,273 1198,282 C1208,291 1209,310 1203.5,327 C1202,318 1202,306 1198,298 C1192,288 1160,288 1153,297 C1148,304 1148,316 1146,326 Z" fill="#27221f"/>
<path d="M1153,297 C1160,285 1192,285 1198,298 C1190,291 1162,291 1153,297 Z" fill="#5a4538" opacity="0.6"/>
<path d="M1154,313 Q1161,310.5 1168,313.5 M1181,313.5 Q1188,310.5 1196,313" fill="none" stroke="#3a2a24" stroke-width="1.4"/>
<path d="M1156,320.5 H1166 M1183,320.5 H1193" fill="none" stroke="#3a2722" stroke-width="1.6"/>
<path d="M1171,330 Q1175,339 1180,335" fill="none" stroke="#8f6353" stroke-width="1.6"/>
<path d="M1166,350 Q1175,347.5 1185,350 Q1175,353.5 1166,350 Z" fill="#8e4f47"/>
<path d="M1151,345 Q1156,366 1166,377 M1199,345 Q1196,366 1186,377" fill="none" stroke="#e8e8e8" stroke-width="0.8"/>
</g>
<g filter="url(#bt)" opacity="0.75">
<rect x="1149.5" y="317.0" width="20.5" height="11.0" fill="none" stroke="#b9b4b0" stroke-width="1.1" rx="3"/>
<rect x="1179.0" y="317.0" width="20.5" height="11.0" fill="none" stroke="#b9b4b0" stroke-width="1.1" rx="3"/>
<line x1="1170.0" y1="320.0" x2="1179.0" y2="320.0" stroke="#b9b4b0" stroke-width="1"/>
<line x1="1146.5" y1="319.0" x2="1149.5" y2="319.5" stroke="#b9b4b0" stroke-width="1.3"/>
<line x1="1199.5" y1="319.5" x2="1203.0" y2="319.0" stroke="#b9b4b0" stroke-width="1.3"/>
</g></g>
<g clip-path="url(#c4)">
<g filter="url(#bl)">
<path d="M1128,503 Q1136,484 1162,475 L1212,475 Q1232,482 1239.5,503 Z" fill="#76a6d3"/>
<path d="M1128,503 Q1136,484 1150,479 L1146,503 Z" fill="#86b4de"/>
<path d="M1164,472 Q1166,498 1186,499 Q1204,498 1206,474 Z" fill="#f1f2f2"/>
<path d="M1166,438 C1165,468 1170,478 1178,484 C1183,487.5 1192,487.5 1197,484 C1205,478 1209,466 1209.5,438 Z" fill="url(#sk4)"/>
<path d="M1159,448 Q1156,458 1161,466 L1166,464 L1166,448 Z" fill="#3b4d66"/>
<path d="M1158,452 C1154,430 1162,412 1184,409.5 C1206,408 1217,426 1214.5,450 C1213,456 1211,458 1208.5,459 C1209,452 1206,446 1203,443 C1196,452 1180,458 1167,458.5 C1166,462 1165,464 1163,466 C1160,462 1158.5,457 1158,452 Z" fill="#1d2631"/>
<path d="M1170,420 Q1186,412 1204,424" fill="none" stroke="#32414f" stroke-width="2" opacity="0.7"/>
<path d="M1172,464.5 Q1176,466 1180,465 M1192,465 Q1196,466 1200,464" fill="none" stroke="#4a3a36" stroke-width="1.2"/>
<path d="M1184,468 Q1185,475 1190,473" fill="none" stroke="#b99c90" stroke-width="1.4"/>
<path d="M1181,479.5 Q1187,478 1193,479.5" fill="none" stroke="#a97a72" stroke-width="1.3"/>
</g>
</g>
<g clip-path="url(#c5)">
<g filter="url(#bl)">
<path d="M1114,620 Q1124,606 1161,594 L1199,597 Q1226,604 1235,620 Z" fill="#1a2337"/>
<path d="M1163,586 L1160,620 L1199,620 L1197,588 Z" fill="#b08676"/>
<path d="M1166,620 Q1164,604 1163,596 M1194,620 Q1196,606 1197,598" fill="none" stroke="#e9ecef" stroke-width="1"/>
<path d="M1160,568 C1157,548 1166,535.5 1184,535.5 C1202,535.5 1210,548 1208,570 L1204,566 C1204,552 1198,541 1184,541 C1170,541 1164,552 1164,566 Z" fill="#262d3c"/>
<path d="M1161.5,560 C1160.5,578 1164,592 1173,598.5 C1179,602.5 1189,602.5 1195,598 C1203,590 1207,576 1206.5,558 C1205,544 1196,539.5 1184,539.5 C1171,539.5 1163,545 1161.5,560 Z" fill="url(#sk5)"/>
<path d="M1168,590 Q1182,604 1197,592 Q1190,600 1182,600.5 Q1174,600.5 1168,590 Z" fill="#7a5a50" opacity="0.7"/>
<path d="M1172,584.5 Q1181,581.5 1192,584.5" fill="none" stroke="#7d5148" stroke-width="1.6"/>
<path d="M1178,568 Q1180,577 1186,575" fill="none" stroke="#9a7464" stroke-width="1.5"/>
<path d="M1168,563.5 H1176 M1189,564.5 H1197" fill="none" stroke="#3a2a26" stroke-width="1.4"/>
</g>
<g filter="url(#bt)">
<rect x="1163.5" y="558.0" width="18.0" height="12.0" fill="#5a5560" stroke="#1c1a1d" stroke-width="2" rx="2.5" fill-opacity="0.28"/>
<rect x="1186.5" y="559.0" width="18.0" height="12.0" fill="#5a5560" stroke="#1c1a1d" stroke-width="2" rx="2.5" fill-opacity="0.28"/>
<line x1="1181.0" y1="562.5" x2="1186.5" y2="563.0" stroke="#1c1a1d" stroke-width="1.6"/>
<line x1="1160.5" y1="561.0" x2="1164.0" y2="561.5" stroke="#1c1a1d" stroke-width="1.6"/>
<line x1="1204.0" y1="562.5" x2="1207.5" y2="562.5" stroke="#1c1a1d" stroke-width="1.6"/>
</g></g>
<rect x="1283.0" y="1.5" width="1.0" height="496.2" fill="#0a3a5a" opacity="0.25"/>
</svg>
</body>
</html>
